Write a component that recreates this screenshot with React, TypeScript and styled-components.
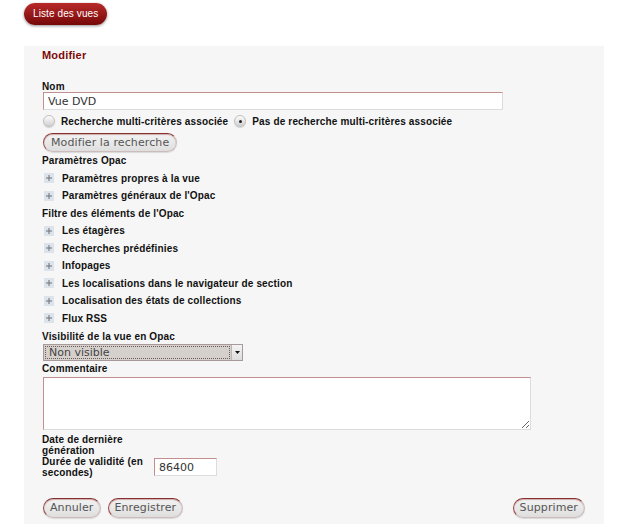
import React from "react";
import styled, { createGlobalStyle } from "styled-components";

const Global = createGlobalStyle`
  html, body { margin: 0; padding: 0; background: #ffffff; }
  body { font-family: "Liberation Sans", Arial, sans-serif; }
  * { box-sizing: border-box; }
`;

const Page = styled.div`
  padding: 3px 0 0 24px;
  width: 630px;
  height: 524px;
  overflow: hidden;
`;

const TopButton = styled.button`
  display: block;
  height: 22px;
  padding: 0 9px;
  border: none;
  border-radius: 11px;
  background: linear-gradient(#b82a2a, #760808);
  box-shadow: 0 1px 3px rgba(0, 0, 0, 0.45);
  color: #ffffff;
  font-family: "Liberation Sans", Arial, sans-serif;
  font-size: 10px;
  letter-spacing: 0.1px;
  line-height: 22px;
  cursor: pointer;
`;

const Panel = styled.form`
  margin-top: 21px;
  width: 580px;
  background: #f6f6f6;
  padding: 3px 19px 20px 18px;
  display: flex;
  flex-direction: column;
`;

const Title = styled.h3`
  margin: 0;
  font-size: 11px;
  line-height: 13px;
  letter-spacing: 0.2px;
  font-weight: bold;
  color: #7d0a0a;
`;

const Label = styled.label<{ $mt?: number }>`
  display: block;
  margin-top: ${(p) => p.$mt ?? 0}px;
  font-size: 10px;
  line-height: 11px;
  letter-spacing: 0.15px;
  font-weight: bold;
  color: #111;
`;

const TextInput = styled.input<{ $w: number }>`
  display: block;
  margin-left: 1px;
  width: ${(p) => p.$w}px;
  height: 18px;
  padding: 0 4px;
  border: 1px solid #dcdcdc;
  border-top-color: #c28e8e;
  border-left-color: #c28e8e;
  background: #ffffff;
  font-family: "DejaVu Sans", sans-serif;
  font-size: 11px;
  color: #333;
  outline: none;
`;

const RadioRow = styled.div`
  display: flex;
  align-items: center;
  height: 16px;
  margin-top: 3px;
  margin-left: 1px;
`;

const RadioItem = styled.label<{ $ml?: number }>`
  display: flex;
  align-items: center;
  margin-left: ${(p) => p.$ml ?? 0}px;
  font-size: 10px;
  letter-spacing: 0.15px;
  font-weight: bold;
  color: #111;
`;

const RadioDot = styled.span<{ $checked?: boolean }>`
  display: inline-flex;
  align-items: center;
  justify-content: center;
  width: 12px;
  height: 12px;
  border-radius: 50%;
  margin-right: 6px;
  border: 1px solid #c0c0c0;
  background: linear-gradient(#fdfdfd, #d0d0d0);
  box-shadow: 0 1px 1px rgba(0, 0, 0, 0.15);
  &::after {
    content: "";
    width: 3px;
    height: 3px;
    border-radius: 50%;
    background: ${(p) => (p.$checked ? "#222" : "transparent")};
  }
`;

const PillButton = styled.button<{ $mt?: number }>`
  height: 20px;
  padding: 0 6px;
  border-radius: 10px;
  border: 1px solid #cdbcbc;
  border-top-color: #86302f;
  border-left-color: #9c4848;
  background: linear-gradient(#f3f3f3, #dedede);
  box-shadow: inset 0 1px 1px rgba(140, 40, 40, 0.35), 0 1px 1px rgba(0, 0, 0, 0.12);
  font-family: "DejaVu Sans", sans-serif;
  font-size: 11px;
  letter-spacing: 0.1px;
  line-height: 18px;
  color: #555;
  cursor: pointer;
`;

const SearchButton = styled(PillButton)`
  align-self: flex-start;
  margin: 4px 0 0 1px;
  height: 19px;
  padding: 0 7px;
`;

const Section = styled.div`
  font-size: 10px;
  line-height: 17.5px;
  height: 17.5px;
  letter-spacing: 0.15px;
  font-weight: bold;
  color: #111;
`;

const Expander = styled.div`
  display: flex;
  align-items: center;
  height: 17.5px;
  font-size: 10px;
  letter-spacing: 0.15px;
  font-weight: bold;
  color: #111;
`;

const PlusBox = styled.span`
  display: inline-block;
  width: 10px;
  height: 10px;
  margin: 0 8px 0 2px;
  flex: none;
`;

const Plus = () => (
  <PlusBox>
    <svg width="10" height="10" viewBox="0 0 10 10">
      <rect x="0" y="0" width="10" height="10" fill="#dde3ea" />
      <rect x="2" y="4.5" width="6" height="1" fill="#6c737b" />
      <rect x="4.5" y="2" width="1" height="6" fill="#6c737b" />
    </svg>
  </PlusBox>
);

const SelectBox = styled.div`
  display: flex;
  margin: 2px 0 0 1px;
  width: 200px;
  height: 17px;
  border: 1px solid #a89a9a;
  background: #d6d0cd;
`;

const SelectValue = styled.div`
  flex: 1;
  margin: 1px;
  border: 1px dotted #6a5a5a;
  padding: 0 3px;
  font-family: "DejaVu Sans", sans-serif;
  font-size: 11px;
  line-height: 12px;
  color: #444;
`;

const SelectArrow = styled.div`
  width: 11px;
  display: flex;
  align-items: center;
  justify-content: center;
  background: linear-gradient(#f4f4f4, #dcdcdc);
  border-left: 1px solid #b8b8b8;
`;

const TextArea = styled.textarea`
  display: block;
  margin: 3px 0 0 1px;
  width: 488px;
  height: 53px;
  border: 1px solid #dcdcdc;
  border-top-color: #c28e8e;
  border-left-color: #c28e8e;
  background: #ffffff;
  resize: both;
  outline: none;
`;

const InfoGrid = styled.div`
  display: grid;
  grid-template-columns: 110px auto;
  column-gap: 1px;
  align-items: center;
  justify-content: start;
  margin-top: 4px;
`;

const GridLabel = styled.div`
  font-size: 10px;
  line-height: 11px;
  letter-spacing: 0.15px;
  font-weight: bold;
  color: #111;
`;

const Actions = styled.div`
  display: flex;
  align-items: center;
  margin-top: 20px;
  padding-left: 1px;
`;

const Spacer = styled.div`
  flex: 1;
`;

const ActionButton = styled(PillButton)<{ $ml?: number }>`
  margin-left: ${(p) => p.$ml ?? 0}px;
`;

const expanders = [
  "Paramètres propres à la vue",
  "Paramètres généraux de l'Opac",
];
const filters = [
  "Les étagères",
  "Recherches prédéfinies",
  "Infopages",
  "Les localisations dans le navigateur de section",
  "Localisation des états de collections",
  "Flux RSS",
];

export default function App() {
  return (
    <>
      <Global />
      <Page>
        <TopButton type="button">Liste des vues</TopButton>
        <Panel onSubmit={(e) => e.preventDefault()}>
          <Title>Modifier</Title>
          <Label $mt={19}>Nom</Label>
          <TextInput $w={460} defaultValue="Vue DVD" />
          <RadioRow>
            <RadioItem>
              <RadioDot />
              Recherche multi-critères associée
            </RadioItem>
            <RadioItem $ml={6}>
              <RadioDot $checked />
              Pas de recherche multi-critères associée
            </RadioItem>
          </RadioRow>
          <SearchButton type="button">Modifier la recherche</SearchButton>
          <Section>Paramètres Opac</Section>
          {expanders.map((t) => (
            <Expander key={t}>
              <Plus />
              {t}
            </Expander>
          ))}
          <Section>Filtre des éléments de l'Opac</Section>
          {filters.map((t) => (
            <Expander key={t}>
              <Plus />
              {t}
            </Expander>
          ))}
          <Label $mt={4}>Visibilité de la vue en Opac</Label>
          <SelectBox>
            <SelectValue>Non visible</SelectValue>
            <SelectArrow>
              <svg width="5" height="3" viewBox="0 0 5 3">
                <polygon points="0,0 5,0 2.5,3" fill="#111" />
              </svg>
            </SelectArrow>
          </SelectBox>
          <Label $mt={2}>Commentaire</Label>
          <TextArea />
          <InfoGrid>
            <GridLabel>Date de dernière génération</GridLabel>
            <div />
            <GridLabel>Durée de validité (en secondes)</GridLabel>
            <TextInput $w={63} defaultValue="86400" />
          </InfoGrid>
          <Actions>
            <ActionButton type="button">Annuler</ActionButton>
            <ActionButton type="button" $ml={7}>
              Enregistrer
            </ActionButton>
            <Spacer />
            <ActionButton type="button">Supprimer</ActionButton>
          </Actions>
        </Panel>
      </Page>
    </>
  );
}
